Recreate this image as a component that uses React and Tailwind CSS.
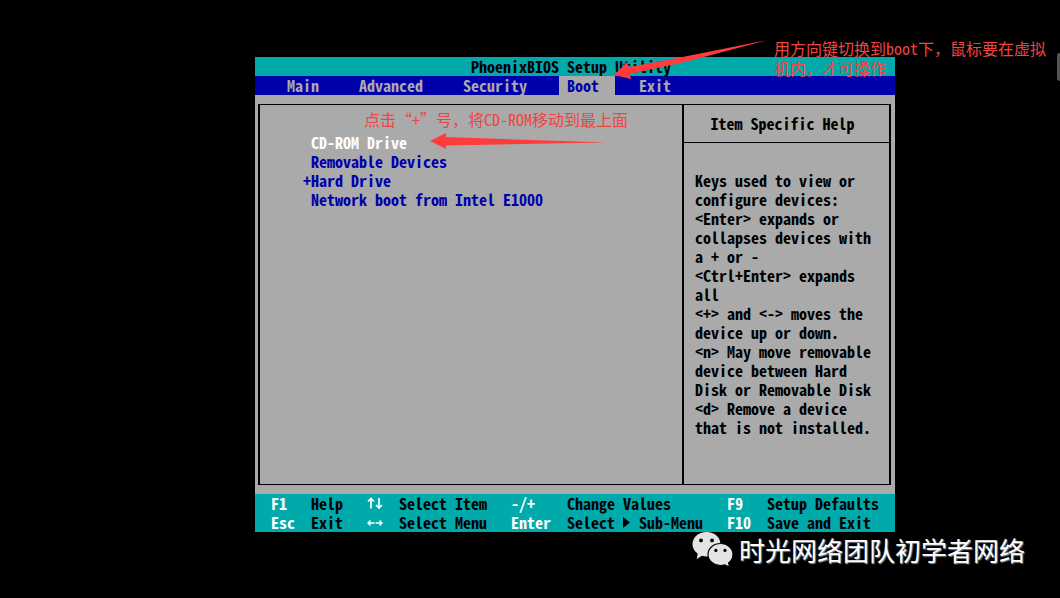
const menu = ["Main", "Advanced", "Security", "Boot", "Exit"];

const devices = [
  { name: "CD-ROM Drive", mark: "", active: true },
  { name: "Removable Devices", mark: "" },
  { name: "Hard Drive", mark: "+" },
  { name: "Network boot from Intel E1000", mark: "" },
];

const help = [
  "Keys used to view or configure devices:",
  "<Enter> expands or collapses devices with a + or -",
  "<Ctrl+Enter> expands all",
  "<+> and <-> moves the device up or down.",
  "<n> May move removable device between Hard Disk or Removable Disk",
  "<d> Remove a device that is not installed.",
];

function VerticalArrows() {
  return (
    <svg width="16" height="19" viewBox="0 0 16 19" fill="none" stroke="currentColor" role="img" aria-label="Up and down arrows">
      <path d="M4 4.500V14.500M1 7.500L4 4.500L7 7.500" strokeWidth="1.700" />
      <path d="M12 4V14M9 11L12 14L15 11" strokeWidth="1.700" />
    </svg>
  );
}

function HorizontalArrows() {
  return (
    <svg width="16" height="19" viewBox="0 0 16 19" fill="none" stroke="currentColor" role="img" aria-label="Left and right arrows">
      <path d="M1 10H7.500M3.500 7.500L1 10L3.500 12.500M8.500 10H15M12.500 7.500L15 10L12.500 12.500" strokeWidth="1.400" />
    </svg>
  );
}

function Triangle() {
  return (
    <svg className="mx-2 inline-block align-top" width="8" height="19" viewBox="0 0 8 19" fill="currentColor" aria-hidden="true">
      <path d="M0 4L7 9.500L0 15Z" />
    </svg>
  );
}

function WeChatLogo() {
  return (
    <svg width="42" height="36" viewBox="0 0 42 36" aria-hidden="true">
      <path d="M14.500 0C6.500 0 .5 5.300 .5 12.200C.5 16 2.500 19.300 5.700 21.600L4.800 27L10 23.800C11.400 24.200 13 24.400 14.500 24.400C22.500 24.400 28.500 19 28.500 12.200C28.500 5.300 22.500 0 14.500 0Z" fill="#e4e4e4" />
      <path d="M28.500 11.500C21.500 11.500 16 16.300 16 22.500C16 28.700 21.500 33.500 28.500 33.500C30 33.500 31.400 33.300 32.700 32.900L37.500 35L36.600 31C39.300 29 41 26 41 22.500C41 16.300 35.500 11.500 28.500 11.500Z" fill="#e4e4e4" stroke="#000" strokeWidth="1.200" />
      <g fill="#000">
        <circle cx="9" cy="8.400" r="1.900" />
        <circle cx="20" cy="8.400" r="1.900" />
        <circle cx="23.900" cy="18.400" r="1.600" />
        <circle cx="33" cy="18.400" r="1.600" />
      </g>
    </svg>
  );
}

export default function App() {
  return (
    <div className="relative min-h-screen overflow-hidden bg-black pt-[57px] pr-[165px] pl-[255px] font-['Noto_Sans_Mono_CJK_SC','Liberation_Mono',monospace] text-[16px] leading-[19px] font-bold">
      <main className="relative bg-[#aaaaaa] text-black">
        <h1 className="bg-[#00aaaa] pr-2 text-center">PhoenixBIOS Setup Utility</h1>
        <nav className="flex gap-4 bg-[#0000aa] pl-6" aria-label="Setup menu">
          {menu.map((item) => (
            <button
              key={item}
              type="button"
              className={item === "Boot" ? "bg-[#aaaaaa] pr-4 pl-2 text-[#0000aa]" : "pr-4 pl-2 text-[#aaaaaa]"}
            >
              {item}
            </button>
          ))}
        </nav>

        <div className="py-[9px] pr-1 pl-[3px]">
          <div className="flex min-h-[381px] border-x-2 border-y border-black">
            <section className="flex-1 pt-7 pl-[43px]">
              <ul>
                {devices.map((d) => (
                  <li key={d.name}>
                    <button type="button" className={d.active ? "flex text-white" : "flex text-[#0000aa]"}>
                      <span className="w-2">{d.mark}</span>
                      {d.name}
                    </button>
                  </li>
                ))}
              </ul>
            </section>
            <aside className="w-[207px] border-l-2 border-black">
              <h2 className="border-b border-black py-[9px] pr-2 text-center">Item Specific Help</h2>
              <div className="pt-7 pr-4 pl-[11px]">
                {help.map((line) => (
                  <p key={line}>{line}</p>
                ))}
              </div>
            </aside>
          </div>
        </div>

        <footer className="grid grid-cols-[40px_56px_32px_112px_56px_160px_40px_1fr] bg-[#00aaaa] pl-4 whitespace-nowrap">
          <span className="text-white">F1</span>
          <span>Help</span>
          <span className="text-white"><VerticalArrows /></span>
          <span>Select Item</span>
          <span className="text-white">-/+</span>
          <span>Change Values</span>
          <span className="text-white">F9</span>
          <span>Setup Defaults</span>
          <span className="text-white">Esc</span>
          <span>Exit</span>
          <span className="text-white"><HorizontalArrows /></span>
          <span>Select Menu</span>
          <span className="text-white">Enter</span>
          <span>Select<Triangle />Sub-Menu</span>
          <span className="text-white">F10</span>
          <span>Save and Exit</span>
        </footer>
      </main>

      <svg className="pointer-events-none absolute top-0 left-0" width="1060" height="200" viewBox="0 0 1060 200" fill="#ff3b3b" aria-hidden="true">
        <path d="M614 75L627 62L629 67L685 56.500L768 40L685 62L630 74L631 79Z" />
        <path d="M430 141L446 133V137L606 142.500L446 145.500V149Z" />
      </svg>
      <p className="absolute top-[110px] left-[364px] font-light whitespace-nowrap text-[#f04444]">点击“+”号，将CD-ROM移动到最上面</p>
      <p className="absolute top-[38px] left-[774px] w-[276px] leading-[20px] font-light text-[#f04444]">
        用方向键切换到boot下，鼠标要在虚拟机内，才可操作
      </p>
      <div className="absolute top-[532px] left-[692px] flex gap-[5px] font-['Noto_Sans_CJK_SC',sans-serif] text-[26px] leading-[36px] font-normal whitespace-nowrap text-white">
        <WeChatLogo />
        <span className="[text-shadow:1px_1px_1px_#888]">时光网络团队初学者网络</span>
      </div>
      <div className="absolute top-[53px] right-0 h-7 w-[3px] rounded-l-full bg-[#555555]" />
    </div>
  );
}
